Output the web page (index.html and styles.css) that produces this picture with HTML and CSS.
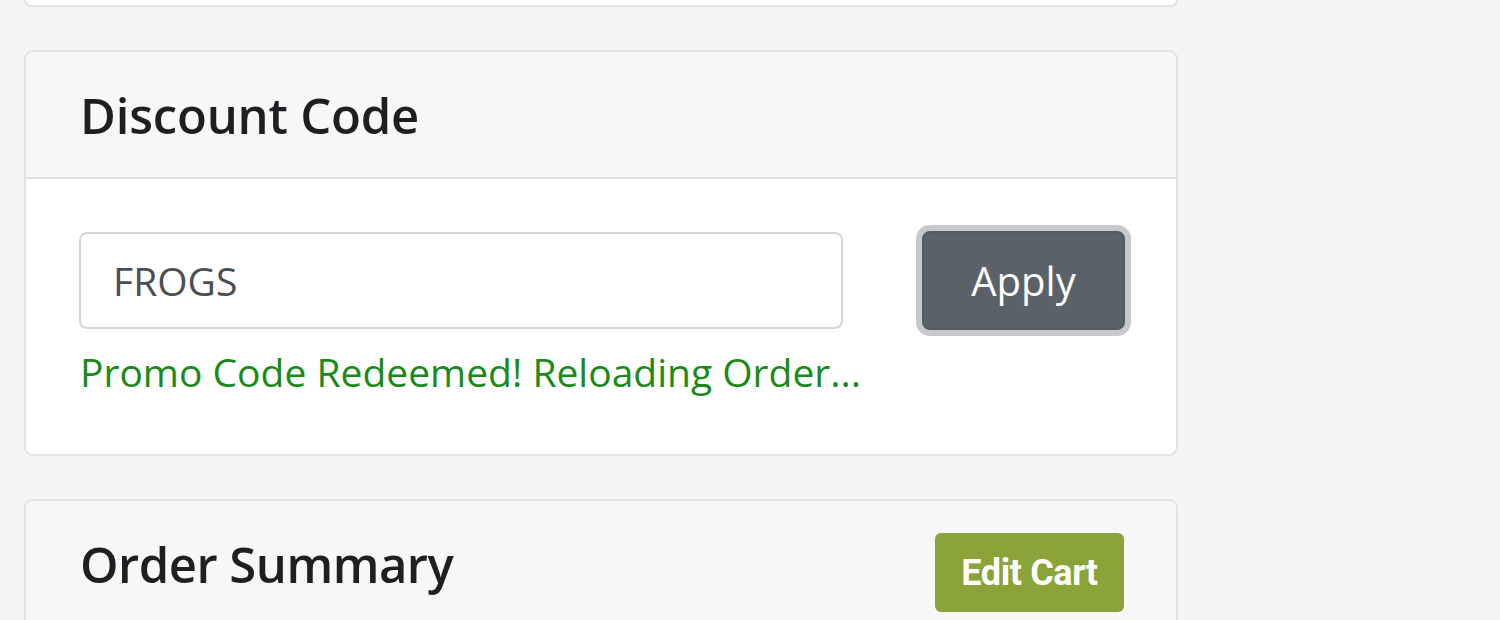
FILE: index.html
```html
<!DOCTYPE html>
<html lang="en">
<head>
<meta charset="utf-8">
<title>Checkout</title>
<link rel="stylesheet" href="styles.css">
</head>
<body>
<main class="page">
  <div class="card card-stub"></div>

  <section class="card">
    <header class="card-header">
      <h2 class="card-title">Discount Code</h2>
    </header>
    <div class="card-body">
      <div class="promo-row">
        <div class="promo-field">
          <input class="form-control" type="text" value="FROGS" aria-label="Discount code">
          <p class="promo-msg">Promo Code Redeemed! Reloading Order...</p>
        </div>
        <button class="btn btn-apply" type="button">Apply</button>
      </div>
    </div>
  </section>

  <section class="card">
    <header class="card-header card-header-split">
      <h2 class="card-title">Order Summary</h2>
      <a class="btn btn-edit" href="#">Edit Cart</a>
    </header>
    <div class="card-body card-body-tall"></div>
  </section>
</main>
</body>
</html>
```

FILE: styles.css
```css
html, body {
  margin: 0;
  padding: 0;
  background: #f5f5f5;
  overflow: hidden;
}

body {
  font-family: "Open Sans", "Noto Sans", "Liberation Sans", sans-serif;
  color: #212529;
}

.page {
  width: 1154px;
  margin-left: 24px;
  display: flex;
  flex-direction: column;
  gap: 43px;
}

.card {
  background: #ffffff;
  border: 2px solid #e2e2e2;
  border-radius: 9px;
  overflow: hidden;
  flex-shrink: 0;
}

.card-stub {
  height: 5px;
  border-top: none;
  border-radius: 0 0 9px 9px;
}

.card-header {
  background: #f7f7f7;
  border-bottom: 2px solid #e0e0e0;
  height: 123px;
  padding: 2px 52px 0 54px;
  display: flex;
  align-items: center;
}

.card-header-split {
  justify-content: space-between;
}

.card-title {
  margin: 0;
  font-size: 49px;
  font-weight: 600;
  line-height: 1.2;
  color: #1d1f22;
  letter-spacing: -0.2px;
}

.card-header-split .card-title {
  letter-spacing: -0.5px;
}

.card-body {
  padding: 53px 51px 0 53px;
  height: 275px;
  box-sizing: border-box;
}

.card-body-tall {
  height: 300px;
}

.promo-row {
  display: flex;
  justify-content: space-between;
  align-items: flex-start;
}

.promo-field {
  width: 764px;
}

.form-control {
  display: block;
  box-sizing: border-box;
  width: 764px;
  height: 97px;
  margin: 0;
  padding: 0 32px;
  border: 2px solid #d4d7da;
  border-radius: 8px;
  background: #fff;
  font-family: "Open Sans", "Noto Sans", sans-serif;
  font-size: 39px;
  color: #4a4f55;
  outline: none;
}

.promo-msg {
  margin: 15px 0 0 1px;
  font-size: 39px;
  line-height: 56px;
  color: #1a8a1a;
  white-space: nowrap;
}

.btn {
  font-family: "Open Sans", "Noto Sans", sans-serif;
  border: none;
  cursor: pointer;
  text-decoration: none;
  display: inline-flex;
  align-items: center;
  justify-content: center;
  box-sizing: border-box;
}

.btn-apply {
  width: 203px;
  height: 99px;
  margin-top: -1px;
  background: #5a6169;
  color: #ffffff;
  font-size: 40px;
  border-radius: 8px;
  box-shadow: 0 0 0 6px #c6c9cd;
  border: 2px solid #545b62;
}

.btn-edit {
  width: 189px;
  height: 79px;
  margin-top: 16px;
  background: #8ba43a;
  color: #ffffff;
  font-family: "Roboto", "Liberation Sans", sans-serif;
  font-weight: 700;
  font-size: 36px;
  letter-spacing: -0.4px;
  border-radius: 6px;
}
```
